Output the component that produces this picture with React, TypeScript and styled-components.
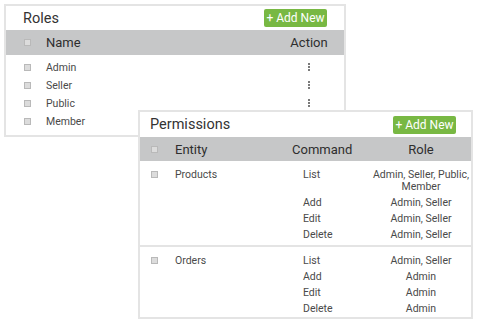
import React from 'react';
import styled, { createGlobalStyle } from 'styled-components';

const GlobalStyle = createGlobalStyle`
  body {
    margin: 0;
    background: #ffffff;
    font-family: Roboto, "Liberation Sans", sans-serif;
    color: #444;
  }
`;

const Page = styled.div`
  padding: 4px 0 0 4px;
  width: 477px;
  height: 324px;
  box-sizing: border-box;
  overflow: hidden;
`;

const Panel = styled.div<{ width: number }>`
  width: ${props => props.width}px;
  box-sizing: border-box;
  border: 2px solid #e4e4e4;
  background: #ffffff;
`;

const PermissionsPanel = styled(Panel)`
  position: relative;
  margin-left: 134px;
  margin-top: -27px;
`;

const TitleBar = styled.div<{ height: number; padLeft: number; padRight: number }>`
  display: flex;
  align-items: center;
  justify-content: space-between;
  height: ${props => props.height}px;
  padding: 0 ${props => props.padRight}px 0 ${props => props.padLeft}px;
`;

const Title = styled.div`
  font-size: 14.5px;
  color: #333;
`;

const AddButton = styled.button`
  display: flex;
  align-items: center;
  justify-content: center;
  width: 63px;
  height: 18px;
  padding: 0;
  border: none;
  border-radius: 2px;
  background: #78b843;
  color: #ffffff;
  font-family: Roboto, "Liberation Sans", sans-serif;
  font-size: 12px;
  font-weight: 400;
  cursor: pointer;
`;

const HeaderBand = styled.div<{ height: number }>`
  display: flex;
  align-items: center;
  height: ${props => props.height}px;
  background: #c6c7c8;
  color: #2e2e2e;
  font-size: 13px;
  font-weight: 400;
`;

const CheckBox = styled.span`
  display: inline-block;
  width: 5px;
  height: 5px;
  border: 1px solid #b9b9b9;
  background: #dcdcdc;
  flex: none;
`;

/* roles */

const RolesCheckCell = styled.div`
  width: 40px;
  padding-left: 18px;
  box-sizing: border-box;
  display: flex;
  align-items: center;
`;

const RolesName = styled.div`
  flex: 1;
`;

const ActionCell = styled.div`
  width: 40px;
  margin-right: 15px;
  display: flex;
  justify-content: center;
  align-items: center;
`;

const RolesBody = styled.div`
  padding: 3px 0 5px;
`;

const RoleRow = styled.div`
  display: flex;
  align-items: center;
  height: 18px;
  font-size: 10.5px;
  color: #4a4a4a;
`;

const Kebab = () => (
  <svg width="2" height="8" viewBox="0 0 2 8">
    <rect x="0" y="0" width="2" height="2" fill="#7a7a7a" />
    <rect x="0" y="3" width="2" height="2" fill="#7a7a7a" />
    <rect x="0" y="6" width="2" height="2" fill="#7a7a7a" />
  </svg>
);

/* permissions */

const PermCheckCell = styled.div<{ top?: number }>`
  width: 35px;
  padding-left: 11px;
  box-sizing: border-box;
  display: flex;
  align-items: ${props => (props.top !== undefined ? 'flex-start' : 'center')};
  padding-top: ${props => props.top ?? 0}px;
`;

const EntityCell = styled.div`
  flex: 1;
`;

const CommandHead = styled.div`
  width: 89px;
  padding-left: 10px;
  box-sizing: border-box;
`;

const RoleHead = styled.div`
  width: 100px;
  text-align: center;
`;

const Group = styled.div<{ last?: boolean }>`
  display: flex;
  padding: 6px 0 ${props => (props.last ? 0 : 2)}px;
  border-bottom: ${props => (props.last ? 'none' : '2px solid #e4e4e4')};
  font-size: 10.5px;
  color: #4a4a4a;
  line-height: 12px;
`;

const EntityName = styled.div`
  flex: 1;
  padding-top: 2px;
`;

const CommandList = styled.div`
  width: 189px;
`;

const CommandRow = styled.div`
  display: grid;
  grid-template-columns: 89px 100px;
  padding: 2px 0;
`;

const CommandName = styled.div`
  padding-left: 21px;
`;

const RoleNames = styled.div`
  text-align: center;
`;

const roles = ['Admin', 'Seller', 'Public', 'Member'];

const permissions = [
  {
    entity: 'Products',
    commands: [
      { name: 'List', role: 'Admin, Seller, Public, Member' },
      { name: 'Add', role: 'Admin, Seller' },
      { name: 'Edit', role: 'Admin, Seller' },
      { name: 'Delete', role: 'Admin, Seller' }
    ]
  },
  {
    entity: 'Orders',
    commands: [
      { name: 'List', role: 'Admin, Seller' },
      { name: 'Add', role: 'Admin' },
      { name: 'Edit', role: 'Admin' },
      { name: 'Delete', role: 'Admin' }
    ]
  }
];

const App: React.FC = () => {
  return (
    <Page>
      <GlobalStyle />
      <Panel width={342}>
        <TitleBar height={24} padLeft={17} padRight={17}>
          <Title>Roles</Title>
          <AddButton>+ Add New</AddButton>
        </TitleBar>
        <HeaderBand height={25}>
          <RolesCheckCell>
            <CheckBox />
          </RolesCheckCell>
          <RolesName>Name</RolesName>
          <ActionCell>Action</ActionCell>
        </HeaderBand>
        <RolesBody>
          {roles.map(role => (
            <RoleRow key={role}>
              <RolesCheckCell>
                <CheckBox />
              </RolesCheckCell>
              <RolesName>{role}</RolesName>
              <ActionCell>
                <Kebab />
              </ActionCell>
            </RoleRow>
          ))}
        </RolesBody>
      </Panel>
      <PermissionsPanel width={335}>
        <TitleBar height={25} padLeft={10} padRight={15}>
          <Title>Permissions</Title>
          <AddButton>+ Add New</AddButton>
        </TitleBar>
        <HeaderBand height={24}>
          <PermCheckCell>
            <CheckBox />
          </PermCheckCell>
          <EntityCell>Entity</EntityCell>
          <CommandHead>Command</CommandHead>
          <RoleHead>Role</RoleHead>
        </HeaderBand>
        {permissions.map((group, i) => (
          <Group key={group.entity} last={i === permissions.length - 1}>
            <PermCheckCell top={4}>
              <CheckBox />
            </PermCheckCell>
            <EntityName>{group.entity}</EntityName>
            <CommandList>
              {group.commands.map(cmd => (
                <CommandRow key={cmd.name}>
                  <CommandName>{cmd.name}</CommandName>
                  <RoleNames>{cmd.role}</RoleNames>
                </CommandRow>
              ))}
            </CommandList>
          </Group>
        ))}
      </PermissionsPanel>
    </Page>
  );
};

export default App;
